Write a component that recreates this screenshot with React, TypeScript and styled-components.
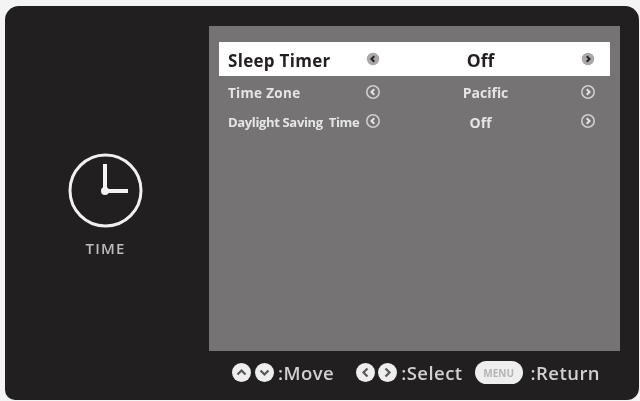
import styled, { createGlobalStyle } from 'styled-components'

const GlobalStyle = createGlobalStyle`
  html, body {
    margin: 0;
    padding: 0;
    background: #f4f4f4;
  }
  body {
    width: 640px;
    height: 401px;
    overflow: hidden;
    font-family: 'Open Sans', 'Liberation Sans', sans-serif;
  }
`

const Screen = styled.div`
  width: 640px;
  height: 401px;
  box-sizing: border-box;
  padding: 6px 1px 0 5px;
  filter: blur(0.6px);
`

const Frame = styled.div`
  width: 634px;
  height: 394px;
  box-sizing: border-box;
  background: #221f20;
  border-radius: 14px 14px 12px 10px;
  padding-top: 20px;
  display: grid;
  grid-template-columns: 204px 411px;
  grid-template-rows: 325px 1fr;
`

const Side = styled.div`
  display: flex;
  flex-direction: column;
  align-items: center;
  padding: 127px 0 0 0;
  box-sizing: border-box;
  width: 201px;
`

const ClockIcon = styled.svg`
  width: 75px;
  height: 75px;
  display: block;
`

const SideLabel = styled.div`
  margin-top: 11px;
  color: #bdbcbc;
  font-size: 15px;
  font-weight: 600;
  letter-spacing: 1.2px;
  line-height: 18px;
`

const Panel = styled.div`
  background: #767374;
  padding: 16px 10px 0;
  display: flex;
  flex-direction: column;
`

const Row = styled.div<{ $active?: boolean; $height: number }>`
  height: ${({ $height }) => $height}px;
  display: grid;
  grid-template-columns: 135px 20px 1fr 20px;
  align-items: center;
  padding: 0 12px 0 9px;
  box-sizing: border-box;
  background: ${({ $active }) => ($active ? '#ffffff' : 'transparent')};
  color: ${({ $active }) => ($active ? '#231f20' : '#e6e5e5')};
  font-weight: 700;
`

const Label = styled.span<{ $size: number; $squeeze?: boolean }>`
  padding-top: 2px;
  font-size: ${({ $size }) => $size}px;
  letter-spacing: ${({ $squeeze }) => ($squeeze ? '-0.35px' : '0.3px')};
  white-space: pre;
`

const Value = styled.span<{ $size: number; $shift?: number }>`
  padding-top: 2px;
  padding-left: ${({ $shift }) => $shift ?? 0}px;
  font-size: ${({ $size }) => $size}px;
  text-align: center;
`

const ArrowWrap = styled.svg`
  width: 14px;
  height: 14px;
  display: block;
  justify-self: center;
`

const Footer = styled.div`
  grid-column: 2;
  display: flex;
  align-items: center;
  padding: 0 0 0 23px;
  height: 43px;
  color: #d2d1d1;
  font-size: 18.5px;
  font-weight: 600;
`

const Hint = styled.span<{ $gap: number }>`
  display: flex;
  align-items: center;
  margin-right: ${({ $gap }) => $gap}px;
  letter-spacing: 0.45px;
  white-space: nowrap;
`

const RoundKey = styled.svg<{ $tight?: boolean }>`
  width: 19px;
  height: 19px;
  display: block;
  margin-right: ${({ $tight }) => ($tight ? 3 : 4)}px;
`

const MenuKey = styled.span`
  width: 48px;
  height: 23px;
  border-radius: 12px;
  background: #efeeee;
  color: #b5b3b3;
  font-size: 10px;
  font-weight: 700;
  letter-spacing: 0;
  display: flex;
  align-items: center;
  justify-content: center;
  margin-right: 8px;
`

type Dir = 'left' | 'right' | 'up' | 'down'

const chevrons: Record<Dir, string> = {
  left: 'M11.5 5.5 L7.5 9.5 L11.5 13.5',
  right: 'M7.5 5.5 L11.5 9.5 L7.5 13.5',
  up: 'M5.5 11.5 L9.5 7.5 L13.5 11.5',
  down: 'M5.5 7.5 L9.5 11.5 L13.5 7.5',
}

const Arrow = ({ dir, active }: { dir: 'left' | 'right'; active?: boolean }) => (
  <ArrowWrap viewBox="0 0 14 14">
    <circle cx="7" cy="7" r="6.2" fill={active ? '#a9a7a8' : 'none'} stroke={active ? 'none' : '#cfcece'} strokeWidth="1.6" />
    <path
      d={dir === 'left' ? 'M8.3 4.2 L5.4 7 L8.3 9.8' : 'M5.7 4.2 L8.6 7 L5.7 9.8'}
      fill="none"
      stroke={active ? '#231f20' : '#e8e7e7'}
      strokeWidth="1.9"
    />
  </ArrowWrap>
)

const Key = ({ dir, tight }: { dir: Dir; tight?: boolean }) => (
  <RoundKey viewBox="0 0 19 19" $tight={tight}>
    <circle cx="9.5" cy="9.5" r="9.5" fill="#efeeee" />
    <path d={chevrons[dir]} fill="none" stroke="#5a5758" strokeWidth="2.2" />
  </RoundKey>
)

const rows = [
  { label: 'Sleep Timer', value: 'Off', size: 17, valueSize: 17.5, height: 34, active: true },
  { label: 'Time Zone', value: 'Pacific', size: 13.5, valueSize: 14, height: 31, shift: 10 },
  { label: 'Daylight Saving  Time', value: 'Off', size: 13, valueSize: 14, height: 28, squeeze: true },
]

export default function App() {
  return (
    <>
      <GlobalStyle />
      <Screen>
        <Frame>
          <Side>
            <ClockIcon viewBox="0 0 75 75">
              <circle cx="37.5" cy="37.5" r="35.5" fill="none" stroke="#f1f0f0" strokeWidth="3" />
              <path d="M37 11 V38 H60" fill="none" stroke="#f4f3f3" strokeWidth="4" />
              <circle cx="37" cy="38" r="4" fill="#f4f3f3" />
            </ClockIcon>
            <SideLabel>TIME</SideLabel>
          </Side>
          <Panel>
            {rows.map((row) => (
              <Row key={row.label} $active={row.active} $height={row.height}>
                <Label $size={row.size} $squeeze={row.squeeze}>
                  {row.label}
                </Label>
                <Arrow dir="left" active={row.active} />
                <Value $size={row.valueSize} $shift={row.shift}>
                  {row.value}
                </Value>
                <Arrow dir="right" active={row.active} />
              </Row>
            ))}
          </Panel>
          <Footer>
            <Hint $gap={22}>
              <Key dir="up" />
              <Key dir="down" />
              :Move
            </Hint>
            <Hint $gap={12}>
              <Key dir="left" tight />
              <Key dir="right" />
              :Select
            </Hint>
            <Hint $gap={0}>
              <MenuKey>MENU</MenuKey>
              :Return
            </Hint>
          </Footer>
        </Frame>
      </Screen>
    </>
  )
}
